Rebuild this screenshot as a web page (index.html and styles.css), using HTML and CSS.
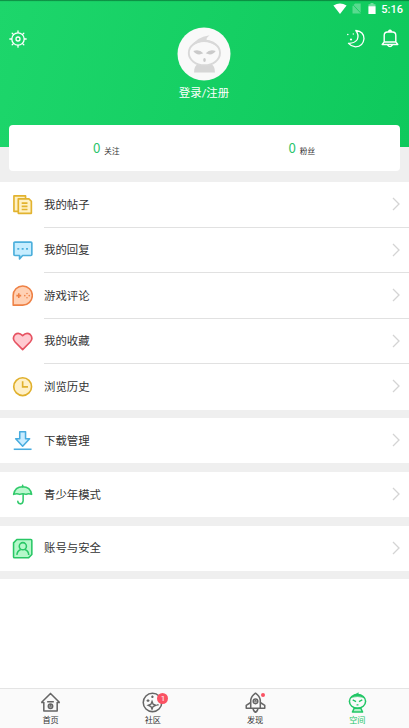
FILE: index.html
```html
<!DOCTYPE html>
<html lang="zh-CN">
<head>
<meta charset="utf-8">
<title>空间</title>
<link rel="stylesheet" href="styles.css">
</head>
<body>
<div class="app">
  <header class="header">
    <div class="status">
      <svg class="wifi" width="14" height="12" viewBox="0 0 14 12"><path d="M.4 2.600Q7-1.800 13.600 2.600L7 11Z" fill="#fff"/></svg>
      <svg class="sim" width="9" height="11" viewBox="0 0 9 11"><path d="M3 .5H8.700V10.500H.5V3Z" fill="#fff" opacity=".3"/><path d="M.3 1L8.700 10" stroke="#19cf64" stroke-width="1"/></svg>
      <svg class="battery" width="8" height="11" viewBox="0 0 8 11"><path d="M2.500 0H5.500V1.200H7.500V11H.5V1.200H2.500Z" fill="#fff" opacity=".4"/><path d="M.5 3.300H7.500V11H.5Z" fill="#fff"/></svg>
      <span class="time">5:16</span>
    </div>
    <div class="top">
      <svg class="gear" width="18" height="18" viewBox="0 0 18 18" fill="none" stroke="#fff" stroke-width="1.300" stroke-linecap="round"><circle cx="9" cy="9" r="6.200"/><circle cx="9" cy="9" r="2"/><path d="M9 .8V2.500M9 15.500V17.200M.8 9H2.500M15.500 9H17.200M3.200 3.200L4.400 4.400M13.600 13.600L14.800 14.800M3.200 14.800L4.400 13.600M13.600 4.400L14.800 3.200"/></svg>
      <div class="profile">
        <svg width="54" height="54" viewBox="0 0 54 54"><circle cx="27" cy="27" r="26.500" fill="#f9f9f9"/><path d="M17 45.500Q17 38.500 22 36H33Q38 38.500 38 45.500Z" fill="#d6d6d6"/><ellipse cx="27.400" cy="26" rx="15.600" ry="12.200" fill="#f9f9f9" stroke="#d8d8d8" stroke-width="1.900"/><path d="M14 20Q19 10 32.500 8.200Q29.500 10.500 29.500 12.800Q37 14 40.500 20Q34 15 27 15Q20 15 14 20Z" fill="#d9d9d9"/><path d="M16.300 24Q22 21.500 26.300 26.300Q20 29.300 16.300 24ZM38.700 24Q33 21.500 28.700 26.300Q35 29.300 38.700 24Z" fill="#cacaca"/><ellipse cx="27.500" cy="33" rx="1.300" ry="2" fill="#cacaca"/></svg>
        <span>登录/注册</span>
      </div>
      <div class="actions">
        <svg width="20" height="20" viewBox="0 0 20 20" fill="none" stroke="#fff" stroke-width="1.300" stroke-linejoin="round"><path d="M9.800 1.500Q18 2.500 18 9.700Q17.200 17.500 9.500 17.800Q5 17.300 2.500 14.300Q8.500 14.500 11.300 10.500Q13.300 6 9.800 1.500Z"/><g fill="#fff" stroke="none"><circle cx="1.800" cy="5.500" r=".8"/><circle cx="7.300" cy="5" r=".7"/><circle cx="5" cy="10.500" r="1.100"/></g></svg>
        <svg width="18" height="20" viewBox="0 0 18 20" fill="none" stroke="#fff" stroke-width="1.400" stroke-linejoin="round"><path d="M3.200 12.800V6.500Q3.200 3 6.500 3H11.500Q14.800 3 14.800 6.500V12.800L16.800 15.500H1.200L3.200 12.800ZM3.200 13H14.800M7.500 2.300Q9 .3 10.500 2.300M6.500 15.800Q9 19.500 11.500 15.800"/></svg>
      </div>
    </div>
  </header>
  <section class="stats">
    <div class="stat"><b>0</b><span>关注</span></div>
    <div class="stat"><b>0</b><span>粉丝</span></div>
  </section>
  <main class="menu">
    <div class="group">
      <div class="row">
        <svg class="icon" viewBox="0 0 22 22" fill="#fff1c5" stroke="#e2b32f" stroke-width="1.700" stroke-linejoin="round"><path d="M2 2H14V18H2Z"/><path d="M6.500 5H17.500L20 7.500V20H6.500Z"/><path d="M10 9.500H16M10 12.800H16M10 16H16"/></svg>
        <div class="cell"><span>我的帖子</span><svg class="chevron" viewBox="0 0 8 14"><path d="M1 1L7 7L1 13"/></svg></div>
      </div>
      <div class="row">
        <svg class="icon" viewBox="0 0 22 22" fill="#c6edff" stroke="#4cafdc" stroke-width="1.700" stroke-linejoin="round"><path d="M3 2.200H19.500Q20.500 2.200 20.500 3.200V15Q20.500 16 19.500 16H11L7.800 19.500V16H3Q2 16 2 15V3.200Q2 2.200 3 2.200Z"/><path d="M5.500 9.200H7.500M10 9.200H12M14.500 9.200H16.500" stroke-width="2"/></svg>
        <div class="cell"><span>我的回复</span><svg class="chevron" viewBox="0 0 8 14"><path d="M1 1L7 7L1 13"/></svg></div>
      </div>
      <div class="row">
        <svg class="icon" viewBox="0 0 22 22" fill="#ffd1b5" stroke="#ee8145" stroke-width="1.600" stroke-linejoin="round"><path d="M1.200 20.800V11A9.900 9.900 0 1 1 11 20.800Z"/><path d="M4.500 11H9.500M7 8.500V13.500"/><g fill="#ee8145" stroke="none"><circle cx="15.500" cy="8.800" r=".8"/><circle cx="13.200" cy="11" r=".8"/><circle cx="17.800" cy="11" r=".8"/><circle cx="15.500" cy="13.200" r=".8"/></g></svg>
        <div class="cell"><span>游戏评论</span><svg class="chevron" viewBox="0 0 8 14"><path d="M1 1L7 7L1 13"/></svg></div>
      </div>
      <div class="row">
        <svg class="icon" viewBox="0 0 22 22" fill="#ffcbd1" stroke="#e65362" stroke-width="1.700" stroke-linejoin="round"><path d="M11 4.800Q7 .6 3.200 3.600Q-.3 7.300 3.200 11.400L11 19.300L18.800 11.400Q22.300 7.300 18.800 3.600Q15 .6 11 4.800Z"/></svg>
        <div class="cell"><span>我的收藏</span><svg class="chevron" viewBox="0 0 8 14"><path d="M1 1L7 7L1 13"/></svg></div>
      </div>
      <div class="row">
        <svg class="icon" viewBox="0 0 22 22" fill="#fff0c8" stroke="#e0b02c" stroke-width="1.700"><circle cx="11" cy="11" r="9.200"/><path d="M11 5.500V11.300H16.500"/></svg>
        <div class="cell"><span>浏览历史</span><svg class="chevron" viewBox="0 0 8 14"><path d="M1 1L7 7L1 13"/></svg></div>
      </div>
    </div>
    <div class="group">
      <div class="row">
        <svg class="icon" viewBox="0 0 22 22" fill="#c9ecff" stroke="#48acdf" stroke-width="1.600" stroke-linejoin="round"><path d="M8 1.800H14V9H18.200L11 16.800L3.800 9H8Z"/><path d="M1.800 19.900H20.200"/></svg>
        <div class="cell"><span>下载管理</span><svg class="chevron" viewBox="0 0 8 14"><path d="M1 1L7 7L1 13"/></svg></div>
      </div>
    </div>
    <div class="group">
      <div class="row">
        <svg class="icon" viewBox="0 0 22 22" fill="#bcf8cf" stroke="#31ca6b" stroke-width="1.600" stroke-linejoin="round" stroke-linecap="round"><path d="M1.700 10.700Q3 2.800 11 2.800Q19 2.800 20.300 10.700Q17 9.300 14.500 10.700Q11 9.300 8 10.700Q5 9.300 1.700 10.700Z"/><path d="M11 1.200V3M11.500 10.500V17.500Q11 20.800 8.500 20.500Q6 20 6 17.800" fill="none"/></svg>
        <div class="cell"><span>青少年模式</span><svg class="chevron" viewBox="0 0 8 14"><path d="M1 1L7 7L1 13"/></svg></div>
      </div>
    </div>
    <div class="group">
      <div class="row">
        <svg class="icon" viewBox="0 0 22 22" fill="#b5f8ca" stroke="#28c765" stroke-width="1.600" stroke-linejoin="round"><path d="M5 1.500H19.500Q20.500 1.500 20.500 2.500V17L17 20.500H2.600Q1.600 20.500 1.600 19.500V5Z"/><circle cx="11.200" cy="8.500" r="3.700"/><path d="M5 17.500Q5.500 13 9 11.800M17.300 17.500Q17 13 13.400 11.800" fill="none"/></svg>
        <div class="cell"><span>账号与安全</span><svg class="chevron" viewBox="0 0 8 14"><path d="M1 1L7 7L1 13"/></svg></div>
      </div>
    </div>
  </main>
  <nav class="tabs">
    <div class="tab">
      <svg viewBox="0 0 22 22" fill="none" stroke="#666" stroke-width="1.600" stroke-linejoin="round"><path d="M4 10.500V20H18V10.500M1.500 11L11 1.500L20.500 11M1.200 11H4M18 11H20.800M7.500 10.200H14.500"/><circle cx="11" cy="15" r="2.300"/><circle cx="11" cy="15" r=".5"/></svg>
      <span>首页</span>
    </div>
    <div class="tab">
      <svg viewBox="0 0 22 22" fill="none" stroke="#666" stroke-width="1.600"><circle cx="11" cy="11" r="9.700"/><path d="M10.500 9.800L11.600 12.800L14.500 14L11.600 15.200L10.500 18L9.400 15.200L6.500 14L9.400 12.800Z" stroke-width="1.400"/><path d="M4.800 9H7.800M6.300 7.500V10.500M9.600 5H12.200M10.900 3.700V6.300M15.500 13.500H17.500" stroke-width="1.300"/></svg>
      <i class="badge">1</i>
      <span>社区</span>
    </div>
    <div class="tab">
      <svg viewBox="0 0 22 22" fill="none" stroke="#666" stroke-width="1.600" stroke-linejoin="round"><path d="M6 17V8.500Q6.500 4.500 11 1.300Q15.500 4.500 16 8.500V17ZM6 11L1.300 14V17H6M16 11L20.700 14V17H16M8.500 17Q8.500 20 11 21.200Q13.500 20 13.500 17"/><circle cx="11" cy="9.800" r="2.400"/><circle cx="11" cy="9.800" r=".5"/></svg>
      <i class="dot"></i>
      <span>发现</span>
    </div>
    <div class="tab active">
      <svg viewBox="0 0 22 22" fill="none" stroke="#22c666" stroke-width="1.600" stroke-linejoin="round"><ellipse cx="11" cy="9.800" rx="8.500" ry="7.200"/><path d="M4 6Q7.500 2.500 12 .8L11.500 2.600Q16 3 18 6Q11 3.500 4 6Z" fill="#22c666" stroke-width=".5"/><path d="M6 8.300L9.500 10M16 8.300L12.500 10M10 13.500H12" stroke-width="1.400"/><path d="M7.500 17H14.500L16.300 21H5.700Z" fill="#aef0c6"/></svg>
      <span>空间</span>
    </div>
  </nav>
</div>
</body>
</html>
```
FILE: styles.css
```css
* { box-sizing: border-box; }
body {
  margin: 0;
  font-family: Roboto, "Noto Sans CJK SC", sans-serif;
  color: #333;
}
svg { display: block; flex: none; }
.app {
  height: 728px;
  display: flex;
  flex-direction: column;
  background: #fff;
  overflow: hidden;
}
.header {
  height: 147px;
  flex: none;
  background: linear-gradient(105deg, #1dd66b, #0ec95c);
  box-shadow: inset 0 2px 1px -1px rgba(0, 70, 30, .5);
}
.status {
  height: 18px;
  padding: 0 6px 1px 0;
  display: flex;
  justify-content: flex-end;
  align-items: center;
  color: #fff;
}
.sim { margin-left: 4.500px; }
.battery { margin-left: 7px; }
.time {
  margin-left: 5.500px;
  padding-top: 2px;
  font-size: 11px;
  line-height: 16px;
  font-weight: 500;
}
.top {
  display: grid;
  grid-template-columns: 1fr 100px 1fr;
  padding: 9px 10px 0 9px;
}
.gear { margin-top: 3px; }
.profile {
  display: flex;
  flex-direction: column;
  align-items: center;
  color: #fff;
  font-size: 11.400px;
  line-height: 17px;
}
.profile span { margin-top: 4px; }
.actions {
  display: flex;
  justify-content: flex-end;
  gap: 15px;
  padding-top: 2px;
}
.stats {
  height: 57px;
  flex: none;
  display: flex;
  padding: 0 9px 11.500px;
  margin-top: -22px;
  background: linear-gradient(transparent 22px, #efefef 22px);
}
.stat {
  flex: 1;
  display: flex;
  align-items: center;
  justify-content: center;
  gap: 4px;
  padding-right: 1px;
  background: #fff;
}
.stat:first-child { border-radius: 4px 0 0 4px; }
.stat:last-child { border-radius: 0 4px 4px 0; }
.stat b {
  font-family: "Noto Sans CJK SC", sans-serif;
  font-size: 13.300px;
  line-height: 20px;
  font-weight: 400;
  color: #2bc56c;
}
.stat span {
  font-size: 7.600px;
  padding-top: 5px;
}
.menu {
  display: flex;
  flex-direction: column;
  gap: 8.400px;
  background: #efefef;
  border-bottom: 8.400px solid #efefef;
}
.group { background: #fff; }
.row {
  height: 45.500px;
  display: flex;
  align-items: center;
  padding-left: 11.700px;
}
.icon {
  width: 21.300px;
  height: 21.300px;
}
.cell {
  flex: 1;
  height: 100%;
  display: flex;
  align-items: center;
  justify-content: space-between;
  margin-left: 11px;
  padding-right: 9px;
  font-size: 11.400px;
  line-height: 17px;
  border-bottom: 1px solid #e1e1e1;
}
.cell span { padding-top: 2px; }
.row:last-child .cell { border-bottom-color: transparent; }
.chevron {
  width: 8px;
  height: 14px;
  fill: none;
  stroke: #d4d4d4;
  stroke-width: 1.300;
}
.tabs {
  margin-top: auto;
  height: 40px;
  flex: none;
  display: flex;
  background: #fafafa;
  border-top: 1px solid #e4e4e4;
}
.tab {
  flex: 1;
  position: relative;
  display: flex;
  flex-direction: column;
  align-items: center;
  padding-top: 3px;
  padding-right: 1px;
  font-size: 8.200px;
  line-height: 12px;
}
.tab svg {
  width: 21px;
  height: 21px;
}
.tab span { margin-top: .5px; }
.active { color: #22c666; }
.badge {
  position: absolute;
  left: calc(50% + 4px);
  top: 4px;
  width: 11px;
  height: 11px;
  border-radius: 50%;
  background: #fa5263;
  color: #fff;
  font-size: 8px;
  line-height: 11px;
  font-style: normal;
  text-align: center;
}
.dot {
  position: absolute;
  left: calc(50% + 5.500px);
  top: 4px;
  width: 4px;
  height: 4px;
  border-radius: 50%;
  background: #fa5263;
}
```
